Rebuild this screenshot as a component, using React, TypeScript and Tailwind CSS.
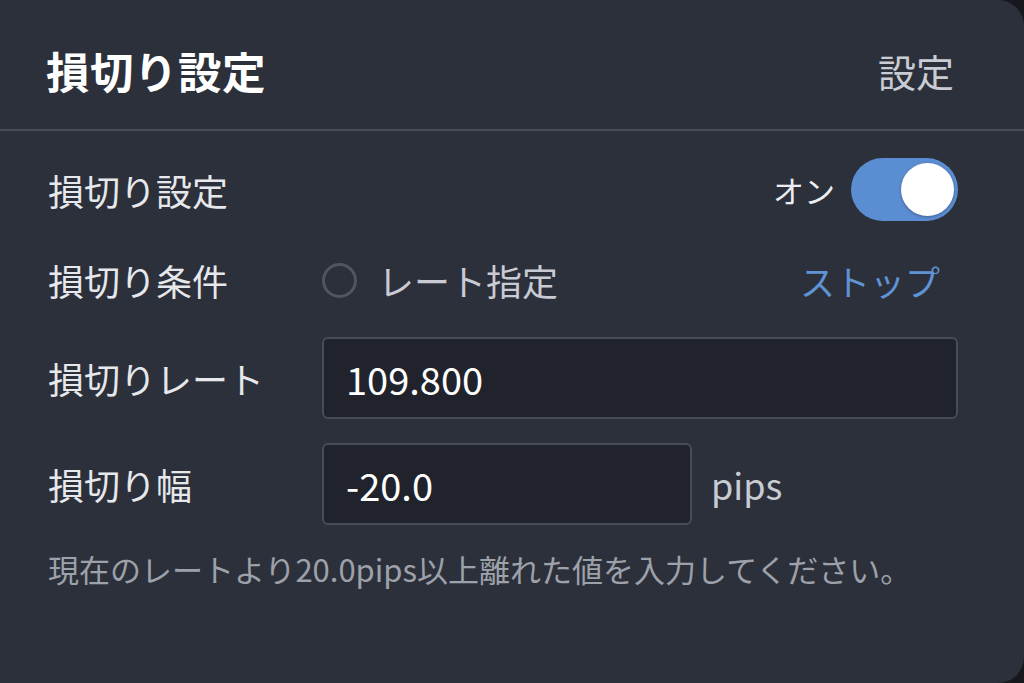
import React from "react";

const font = { fontFamily: '"Noto Sans CJK JP", "Noto Sans", sans-serif' };

export default function App() {
  return (
    <div className="w-[1024px] h-[683px] bg-[#16181d] overflow-hidden" style={font}>
      <div className="w-[1024px] h-[683px] bg-[#2c303a] rounded-r-[26px] flex flex-col">
        <div className="h-[129px] pt-3 pl-[46px] pr-[70px] flex items-center justify-between">
          <div className="text-[43.5px] font-bold text-white leading-none tracking-[0.5px]">損切り設定</div>
          <div className="text-[38px] text-[#c9ccd3] leading-none">設定</div>
        </div>
        <div className="h-[2px] bg-[#474c57]" />
        <div className="flex flex-col pl-[48px] pr-[66px]">
          <div className="mt-[27px] h-[63px] flex items-center justify-between">
            <div className="text-[36px] text-[#e6e8ec] leading-none">損切り設定</div>
            <div className="flex items-center gap-[16px]">
              <span className="text-[31px] text-[#eceef2] leading-none">オン</span>
              <div className="w-[107px] h-[63px] rounded-full bg-[#5b8dd2] flex items-center justify-end pr-[4px]">
                <div className="w-[53px] h-[53px] rounded-full bg-white shadow-[0_1px_3px_rgba(0,0,0,0.3)]" />
              </div>
            </div>
          </div>
          <div className="mt-[29px] h-[60px] flex items-center">
            <div className="w-[274px] text-[36px] text-[#e6e8ec] leading-none">損切り条件</div>
            <div className="w-[35px] h-[35px] rounded-full border-[3px] border-[#50555f]" />
            <div className="ml-[21px] text-[36px] text-[#c8cbd3] leading-none">レート指定</div>
            <div className="ml-auto mr-[18px] text-[35px] text-[#5f93d4] leading-none">ストップ</div>
          </div>
          <div className="mt-[27px] h-[82px] flex items-center">
            <div className="w-[274px] text-[36px] text-[#e6e8ec] leading-none">損切りレート</div>
            <div className="flex-1 h-[82px] rounded-[6px] border-2 border-[#474c56] bg-[#20232b] flex items-center pl-[22px] text-[38px] text-white">
              109.800
            </div>
          </div>
          <div className="mt-[24px] h-[82px] flex items-center">
            <div className="w-[274px] text-[36px] text-[#e6e8ec] leading-none">損切り幅</div>
            <div className="w-[370px] h-[82px] rounded-[6px] border-2 border-[#474c56] bg-[#20232b] flex items-center pl-[22px] text-[38px] text-white">
              -20.0
            </div>
            <div className="ml-[19px] text-[36px] text-[#c8cbd3] leading-none">pips</div>
          </div>
          <div className="mt-[24px] text-[31px] text-[#9da1aa] leading-[40px] whitespace-nowrap">
            現在のレートより20.0pips以上離れた値を入力してください。
          </div>
        </div>
      </div>
    </div>
  );
}
